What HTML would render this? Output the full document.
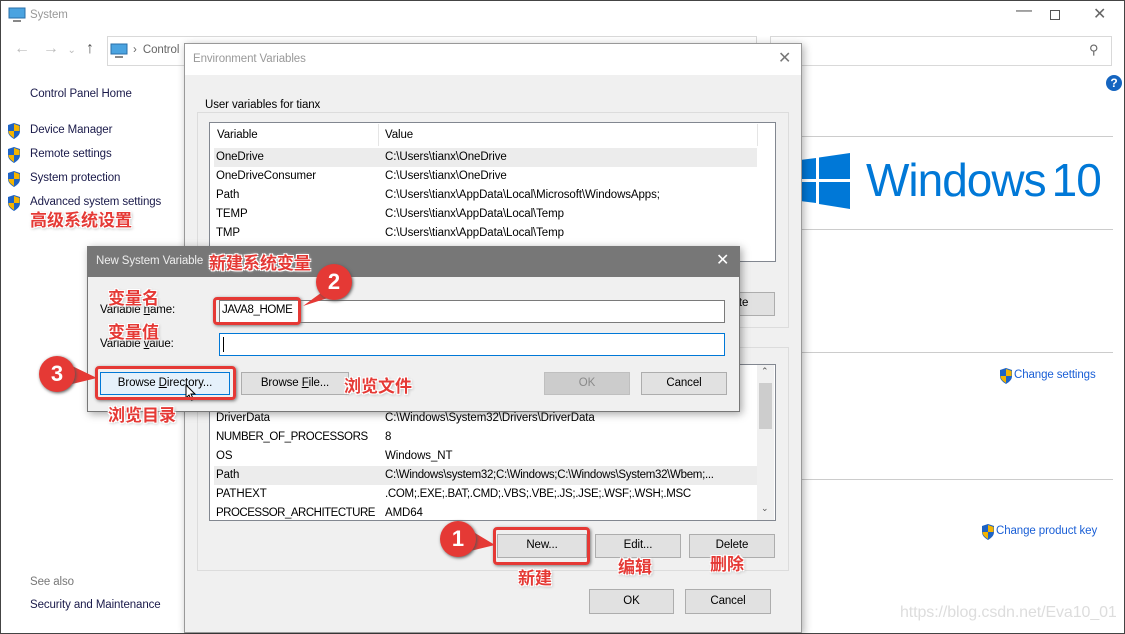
<!DOCTYPE html>
<html><head><meta charset="utf-8"><style>
*{box-sizing:border-box;margin:0;padding:0}
body{width:1125px;height:634px;overflow:hidden;background:#fff;font-family:"Liberation Sans","Noto Sans CJK SC",sans-serif;font-size:11.5px;letter-spacing:-0.1px;color:#000;position:relative}
.a{position:absolute}
.t{position:absolute;white-space:nowrap}
.btn{position:absolute;background:#e1e1e1;border:1px solid #adadad;text-align:center;font-size:11.5px;line-height:20px}
.cn{position:absolute;white-space:nowrap;color:#e53935;font-family:"Noto Sans CJK SC","WenQuanYi Zen Hei",sans-serif;font-weight:bold;font-size:17px;letter-spacing:0;text-shadow:-1px -1px 0 #fff,1px -1px 0 #fff,-1px 1px 0 #fff,1px 1px 0 #fff,0 0 3px #fff,1px 1px 3px #888}
.box{position:absolute;border:3px solid #e53935;border-radius:4px;box-shadow:1px 1px 3px #777}
.num{position:absolute;width:36px;height:36px;border-radius:50%;background:#e53935;color:#fff;font:bold 22px "Liberation Sans",sans-serif;text-align:center;line-height:36px;box-shadow:1px 1px 3px #555}
.row{position:absolute;left:216px;height:19px;line-height:19px}
.sh{position:absolute;width:14px;height:16px}
</style></head><body>
<div class="a" style="left:0;top:0;width:1125px;height:634px;border:1px solid #444"></div>
<svg class="a" style="left:8px;top:7px" width="18" height="16"><rect x="1" y="1" width="16" height="10" fill="#4aa3e0" stroke="#2a6fa8"/><rect x="5" y="13" width="8" height="2" fill="#888"/></svg>
<div class="t" style="left:30px;top:9px;color:#999">System</div>
<div class="t" style="left:1016px;top:2px;color:#555;font-size:16px">—</div>
<div class="a" style="left:1050px;top:10px;width:10px;height:10px;border:1px solid #555"></div>
<div class="t" style="left:1093px;top:4px;color:#666;font-size:16px">✕</div>
<div class="t" style="left:14px;top:40px;color:#bbb;font-size:16px">←&nbsp;&nbsp;&nbsp;→&nbsp;&nbsp;<span style="font-size:10px">⌄</span></div>
<div class="t" style="left:86px;top:40px;color:#555;font-size:16px">↑</div>
<div class="a" style="left:107px;top:36px;width:650px;height:30px;border:1px solid #d9d9d9"></div>
<svg class="a" style="left:110px;top:43px" width="18" height="16"><rect x="1" y="1" width="16" height="10" fill="#4aa3e0" stroke="#2a6fa8"/><rect x="5" y="13" width="8" height="2" fill="#888"/></svg>
<div class="t" style="left:133px;top:44px;color:#666">›&nbsp; Control</div>
<div class="a" style="left:770px;top:36px;width:342px;height:30px;border:1px solid #d9d9d9"></div>
<div class="t" style="left:1089px;top:42px;color:#666;font-size:13px">⚲</div>
<div class="a" style="left:1106px;top:75px;width:16px;height:16px;border-radius:50%;background:#1565c0;color:#fff;font:bold 12px 'Liberation Sans';text-align:center;line-height:16px">?</div>
<div class="t" style="left:30px;top:88px;color:#1a1a4a">Control Panel Home</div>
<div class="t" style="left:30px;top:124px;color:#1a1a4a">Device Manager</div>
<div class="t" style="left:30px;top:148px;color:#1a1a4a">Remote settings</div>
<div class="t" style="left:30px;top:172px;color:#1a1a4a">System protection</div>
<div class="t" style="left:30px;top:196px;color:#1a1a4a">Advanced system settings</div>
<svg class="sh" style="left:7px;top:123px" viewBox="0 0 14 16"><path d="M7 0L13 2V8C13 12 10 14 7 16C4 14 1 12 1 8V2Z" fill="#1e63c4"/><path d="M7 1V8H12.5V3L7 1ZM7 8V15C4 13 1.5 11 1.5 8Z" fill="#f4b400"/></svg>
<svg class="sh" style="left:7px;top:147px" viewBox="0 0 14 16"><path d="M7 0L13 2V8C13 12 10 14 7 16C4 14 1 12 1 8V2Z" fill="#1e63c4"/><path d="M7 1V8H12.5V3L7 1ZM7 8V15C4 13 1.5 11 1.5 8Z" fill="#f4b400"/></svg>
<svg class="sh" style="left:7px;top:171px" viewBox="0 0 14 16"><path d="M7 0L13 2V8C13 12 10 14 7 16C4 14 1 12 1 8V2Z" fill="#1e63c4"/><path d="M7 1V8H12.5V3L7 1ZM7 8V15C4 13 1.5 11 1.5 8Z" fill="#f4b400"/></svg>
<svg class="sh" style="left:7px;top:195px" viewBox="0 0 14 16"><path d="M7 0L13 2V8C13 12 10 14 7 16C4 14 1 12 1 8V2Z" fill="#1e63c4"/><path d="M7 1V8H12.5V3L7 1ZM7 8V15C4 13 1.5 11 1.5 8Z" fill="#f4b400"/></svg>
<div class="cn" style="left:30px;top:206px">高级系统设置</div>
<div class="t" style="left:30px;top:576px;color:#777">See also</div>
<div class="t" style="left:30px;top:599px;color:#1a1a4a">Security and Maintenance</div>
<div class="a" style="left:800px;top:136px;width:313px;height:1px;background:#ccc"></div>
<div class="a" style="left:800px;top:229px;width:313px;height:1px;background:#ccc"></div>
<div class="a" style="left:800px;top:352px;width:313px;height:1px;background:#ccc"></div>
<div class="a" style="left:800px;top:479px;width:313px;height:1px;background:#ccc"></div>
<svg class="a" style="left:800px;top:152px" width="52" height="58"><path d="M0 8L16 6V27H0Z M19 5.5L50 1V27H19Z M0 30H16V51L0 49Z M19 30H50V57L19 52Z" fill="#0078d7"/></svg>
<div class="t" style="left:866px;top:152px;color:#0078d7;font-size:46px;line-height:56px;letter-spacing:-1px;font-family:'Liberation Sans',sans-serif">Windows<span style="margin-left:6px">10</span></div>
<svg class="sh" style="left:999px;top:368px" viewBox="0 0 14 16"><path d="M7 0L13 2V8C13 12 10 14 7 16C4 14 1 12 1 8V2Z" fill="#1e63c4"/><path d="M7 1V8H12.5V3L7 1ZM7 8V15C4 13 1.5 11 1.5 8Z" fill="#f4b400"/></svg>
<div class="t" style="left:1014px;top:369px;color:#1a5fd6">Change settings</div>
<svg class="sh" style="left:981px;top:524px" viewBox="0 0 14 16"><path d="M7 0L13 2V8C13 12 10 14 7 16C4 14 1 12 1 8V2Z" fill="#1e63c4"/><path d="M7 1V8H12.5V3L7 1ZM7 8V15C4 13 1.5 11 1.5 8Z" fill="#f4b400"/></svg>
<div class="t" style="left:996px;top:525px;color:#1a5fd6">Change product key</div>
<div class="t" style="left:900px;top:604px;color:#ddd;font:16px 'Liberation Sans',sans-serif">https://blog.csdn.net/Eva10_01</div>

<div class="a" style="left:184px;top:43px;width:618px;height:590px;background:#f0f0f0;border:1px solid #999;box-shadow:2px 2px 8px rgba(0,0,0,.3)"></div>
<div class="a" style="left:185px;top:44px;width:616px;height:31px;background:#fff"></div>
<div class="t" style="left:193px;top:53px;color:#999">Environment Variables</div>
<div class="t" style="left:778px;top:48px;color:#777;font-size:16px">✕</div>
<div class="a" style="left:197px;top:112px;width:592px;height:216px;border:1px solid #dcdcdc"></div>
<div class="t" style="left:203px;top:99px;background:#f0f0f0;padding:0 2px">User variables for tianx</div>
<div class="a" style="left:209px;top:122px;width:567px;height:140px;background:#fff;border:1px solid #828790"></div>
<div class="a" style="left:378px;top:124px;width:1px;height:22px;background:#e5e5e5"></div>
<div class="a" style="left:757px;top:124px;width:1px;height:22px;background:#e5e5e5"></div>
<div class="t" style="left:217px;top:129px">Variable</div><div class="t" style="left:385px;top:129px">Value</div>
<div class="a" style="left:214px;top:148px;width:543px;height:19px;background:#ececec"></div>
<div class="row" style="top:148px">OneDrive</div><div class="row" style="top:148px;left:385px">C:\Users\tianx\OneDrive</div>
<div class="row" style="top:167px">OneDriveConsumer</div><div class="row" style="top:167px;left:385px">C:\Users\tianx\OneDrive</div>
<div class="row" style="top:186px">Path</div><div class="row" style="top:186px;left:385px">C:\Users\tianx\AppData\Local\Microsoft\WindowsApps;</div>
<div class="row" style="top:205px">TEMP</div><div class="row" style="top:205px;left:385px">C:\Users\tianx\AppData\Local\Temp</div>
<div class="row" style="top:224px">TMP</div><div class="row" style="top:224px;left:385px">C:\Users\tianx\AppData\Local\Temp</div>
<div class="btn" style="left:689px;top:292px;width:86px;height:24px">Delete</div>

<div class="a" style="left:197px;top:347px;width:592px;height:224px;border:1px solid #dcdcdc"></div>
<div class="a" style="left:209px;top:364px;width:567px;height:157px;background:#fff;border:1px solid #828790"></div>
<div class="a" style="left:757px;top:365px;width:17px;height:155px;background:#f0f0f0"></div>
<div class="a" style="left:759px;top:383px;width:13px;height:46px;background:#cdcdcd"></div>
<div class="t" style="left:761px;top:366px;font-size:9px;color:#555">⌃</div>
<div class="t" style="left:761px;top:503px;font-size:9px;color:#555">⌄</div>
<div class="row" style="top:409px">DriverData</div><div class="row" style="top:409px;left:385px">C:\Windows\System32\Drivers\DriverData</div>
<div class="row" style="top:428px;letter-spacing:-0.4px">NUMBER_OF_PROCESSORS</div><div class="row" style="top:428px;left:385px">8</div>
<div class="row" style="top:447px">OS</div><div class="row" style="top:447px;left:385px">Windows_NT</div>
<div class="a" style="left:214px;top:466px;width:543px;height:19px;background:#ececec"></div>
<div class="row" style="top:466px">Path</div><div class="row" style="top:466px;left:385px;letter-spacing:-0.3px">C:\Windows\system32;C:\Windows;C:\Windows\System32\Wbem;...</div>
<div class="row" style="top:485px">PATHEXT</div><div class="row" style="top:485px;left:385px;letter-spacing:-0.3px">.COM;.EXE;.BAT;.CMD;.VBS;.VBE;.JS;.JSE;.WSF;.WSH;.MSC</div>
<div class="row" style="top:504px;height:16px;overflow:hidden;letter-spacing:-0.5px;width:166px">PROCESSOR_ARCHITECTURE</div><div class="row" style="top:504px;left:385px;height:16px;overflow:hidden">AMD64</div>
<div class="btn" style="left:497px;top:534px;width:90px;height:24px">New...</div>
<div class="btn" style="left:595px;top:534px;width:86px;height:24px">Edit...</div>
<div class="btn" style="left:689px;top:534px;width:86px;height:24px">Delete</div>
<div class="btn" style="left:589px;top:589px;width:85px;height:25px;line-height:23px">OK</div>
<div class="btn" style="left:685px;top:589px;width:86px;height:25px;line-height:23px">Cancel</div>

<div class="a" style="left:87px;top:246px;width:653px;height:166px;background:#f0f0f0;border:1px solid #777;box-shadow:2px 2px 8px rgba(0,0,0,.35)"></div>
<div class="a" style="left:87px;top:246px;width:653px;height:31px;background:#777"></div>
<div class="t" style="left:96px;top:255px;color:#eee">New System Variable</div>
<div class="t" style="left:716px;top:250px;color:#fff;font-size:16px">✕</div>
<div class="t" style="left:100px;top:304px">Variable <u>n</u>ame:</div>
<div class="t" style="left:100px;top:338px">Variable <u>v</u>alue:</div>
<div class="a" style="left:219px;top:300px;width:506px;height:23px;background:#fff;border:1px solid #7a7a7a"></div>
<div class="t" style="left:222px;top:304px;letter-spacing:-0.4px">JAVA8_HOME</div>
<div class="a" style="left:219px;top:333px;width:506px;height:23px;background:#fff;border:1px solid #0078d7"></div>
<div class="a" style="left:223px;top:337px;width:1px;height:15px;background:#000"></div>
<div class="btn" style="left:100px;top:372px;width:130px;height:23px;background:#e5f1fb;border-color:#0078d7">Browse <u>D</u>irectory...</div>
<div class="btn" style="left:241px;top:372px;width:108px;height:23px">Browse <u>F</u>ile...</div>
<div class="btn" style="left:544px;top:372px;width:86px;height:23px;background:#ccc;border-color:#bfbfbf;color:#8a8a8a">OK</div>
<div class="btn" style="left:641px;top:372px;width:86px;height:23px">Cancel</div>
<svg class="a" style="left:185px;top:384px" width="12" height="18"><path d="M1 1V14L4 11L6.5 16.5L8.5 15.5L6 10H10Z" fill="#fff" stroke="#000" stroke-width="1"/></svg>

<div class="cn" style="left:209px;top:249px">新建系统变量</div>
<div class="cn" style="left:108px;top:284px">变量名</div>
<div class="cn" style="left:108px;top:318px">变量值</div>
<div class="cn" style="left:344px;top:372px">浏览文件</div>
<div class="cn" style="left:108px;top:401px">浏览目录</div>
<div class="cn" style="left:518px;top:564px">新建</div>
<div class="cn" style="left:618px;top:553px">编辑</div>
<div class="cn" style="left:710px;top:550px">删除</div>
<div class="box" style="left:213px;top:297px;width:88px;height:28px"></div>
<div class="box" style="left:95px;top:366px;width:141px;height:34px"></div>
<div class="box" style="left:493px;top:527px;width:97px;height:38px"></div>
<svg class="a" style="left:0;top:0" width="1125" height="634"><path d="M325 290L303 306L334 296Z M70 365L97 378L72 384Z M470 530L495 545L466 552Z" fill="#e53935"/></svg>
<div class="num" style="left:316px;top:264px">2</div>
<div class="num" style="left:39px;top:356px">3</div>
<div class="num" style="left:440px;top:521px">1</div>
</body></html>
